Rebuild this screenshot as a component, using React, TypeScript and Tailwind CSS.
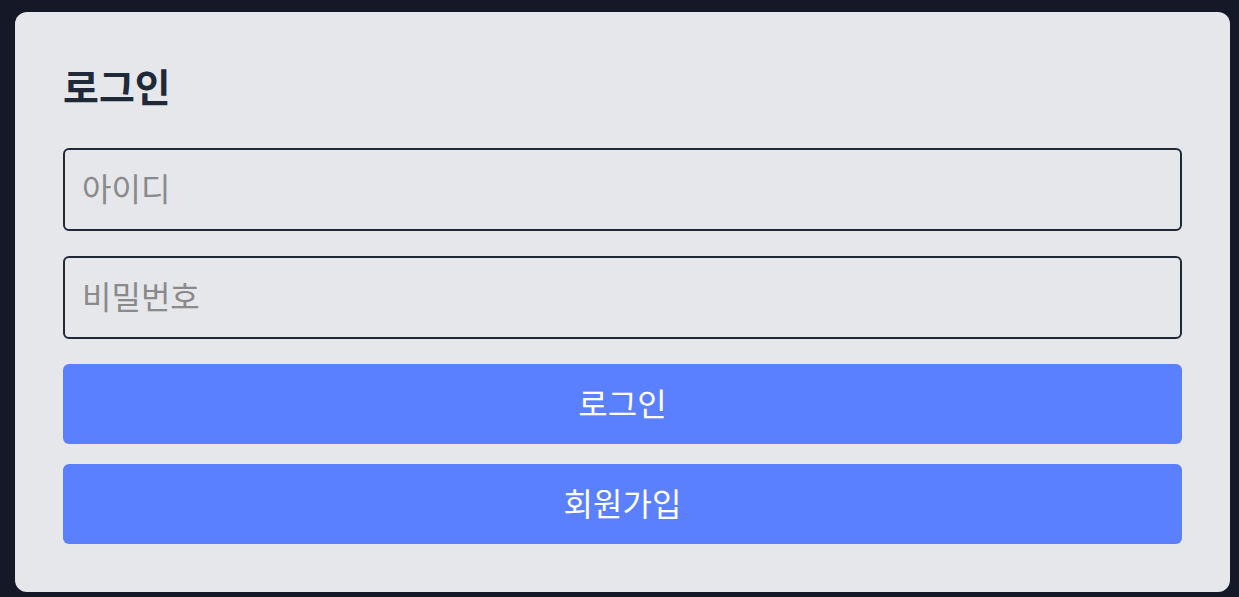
export default function App() {
  return (
    <div
      className="h-screen w-full overflow-hidden bg-[#141827] pl-[15px] pr-[9px] pt-[12px]"
      style={{ fontFamily: '"Noto Sans CJK KR", "Noto Sans", sans-serif' }}
    >
      <div className="rounded-xl bg-[#e5e7eb] px-12 pb-12 pt-[48px]">
        <h1 className="mb-[38px] text-[39px] font-bold leading-[50px] text-[#1f2937]">로그인</h1>
        <form className="flex flex-col" onSubmit={(e) => e.preventDefault()}>
          <input
            type="text"
            placeholder="아이디"
            className="h-[83px] w-full rounded-md border-2 border-[#1f2937] bg-transparent px-[17px] pb-[5px] text-[32px] text-[#1f2937] placeholder:text-[#8a8a8a] focus:outline-none"
          />
          <input
            type="password"
            placeholder="비밀번호"
            className="mt-[25px] h-[83px] w-full rounded-md border-2 border-[#1f2937] bg-transparent px-[17px] pb-[5px] text-[32px] text-[#1f2937] placeholder:text-[#8a8a8a] focus:outline-none"
          />
          <button
            type="submit"
            className="mt-[25px] h-[80px] w-full rounded-md bg-[#5b80ff] pb-[5px] text-[32px] text-white"
          >
            로그인
          </button>
          <button
            type="button"
            className="mt-[20px] h-[80px] w-full rounded-md bg-[#5b80ff] pb-[5px] text-[32px] text-white"
          >
            회원가입
          </button>
        </form>
      </div>
    </div>
  );
}
